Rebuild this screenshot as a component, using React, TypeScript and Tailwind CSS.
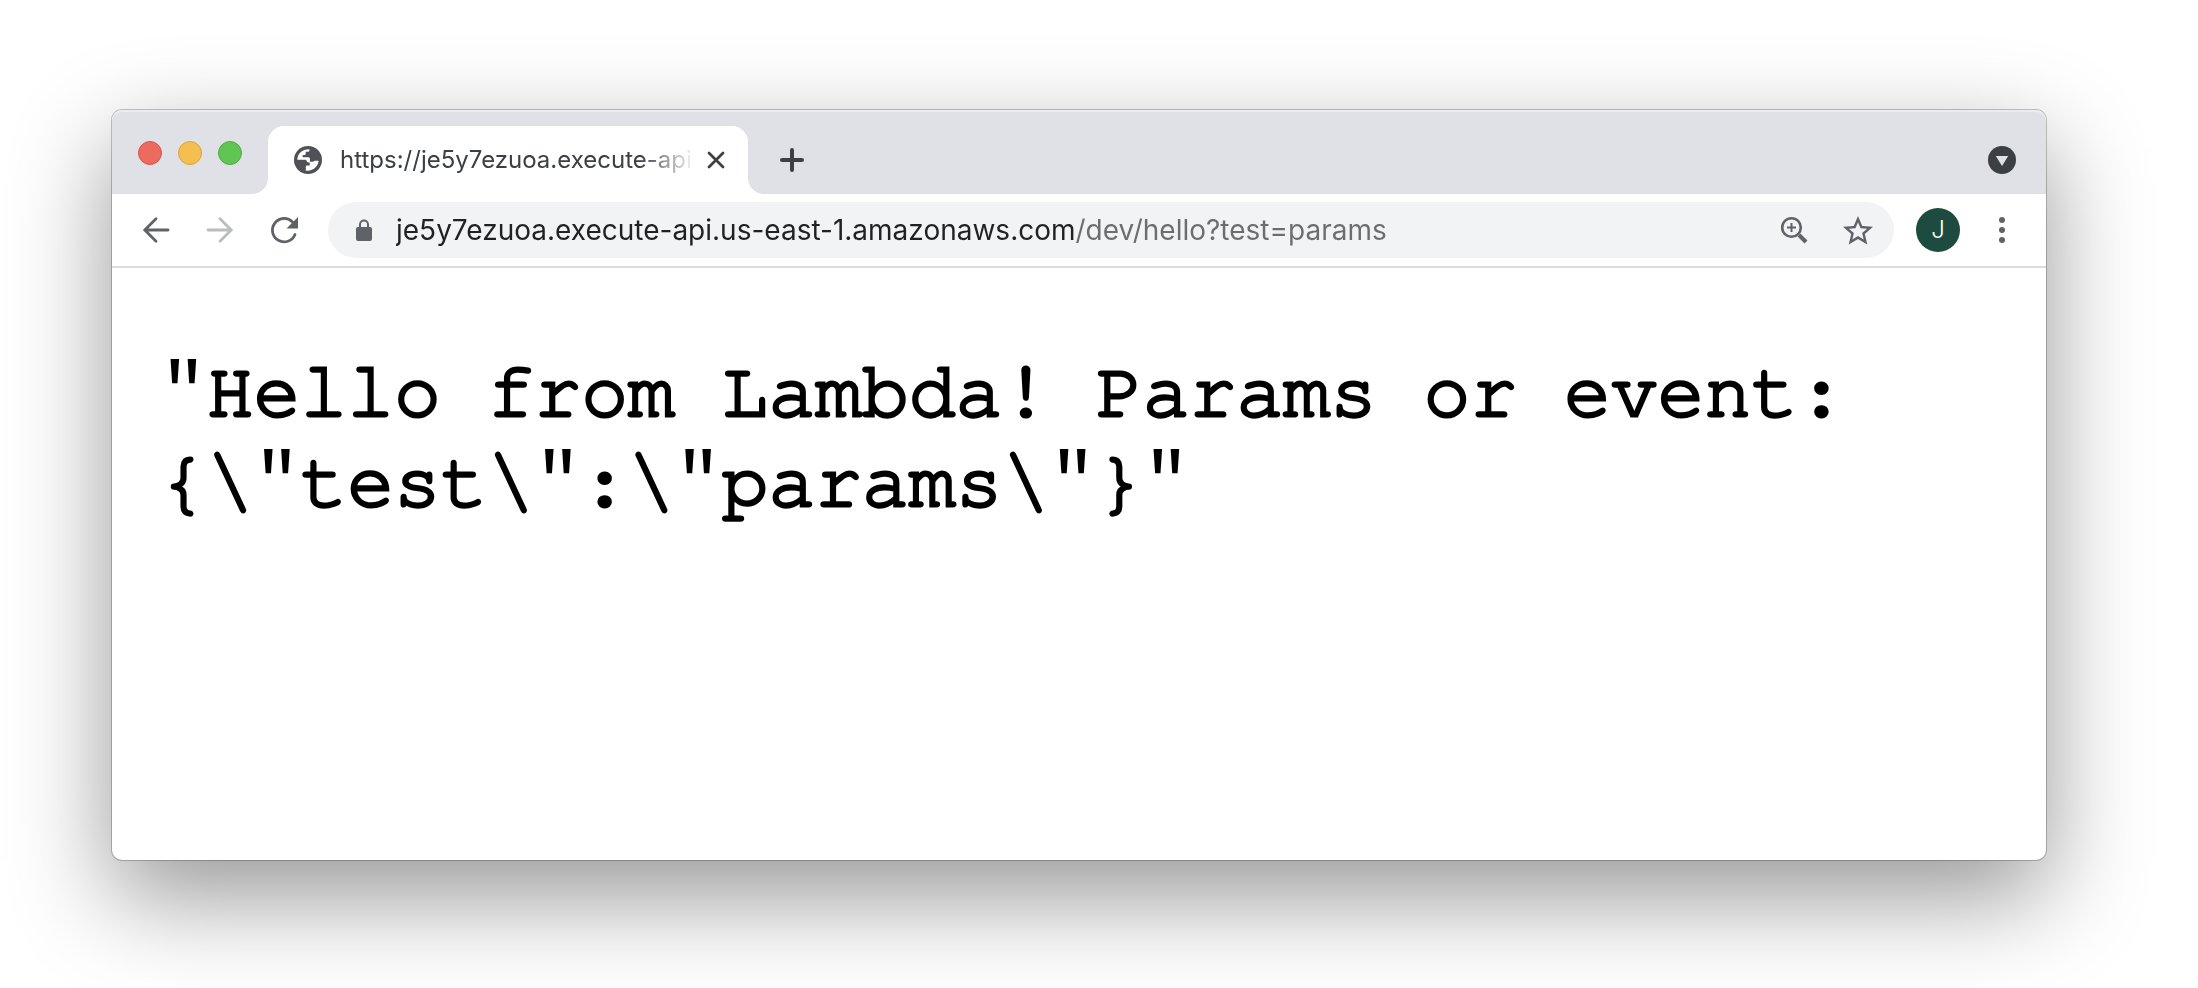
import React from "react";

type IconProps = { className?: string; children: React.ReactNode; size?: number };

function Icon({ className, children, size = 32 }: IconProps) {
  return (
    <svg viewBox={`0 0 ${size} ${size}`} width={size} height={size} className={className} aria-hidden="true">
      {children}
    </svg>
  );
}

function TrafficLights() {
  return (
    <div className="flex gap-4 pl-[26px] pt-[31px]">
      <button aria-label="Close window" className="size-6 rounded-full border border-[#d6574c] bg-[#ec6a5e]" />
      <button aria-label="Minimize window" className="size-6 rounded-full border border-[#d8a23c] bg-[#f5bf4f]" />
      <button aria-label="Zoom window" className="size-6 rounded-full border border-[#50ab42] bg-[#61c554]" />
    </div>
  );
}

function Tab() {
  return (
    <div className="mt-4 ml-[10px] flex h-[68px] items-end">
      <Icon size={16} className="block shrink-0 text-white">
        <path d="M16 0v16H0A16 16 0 0 0 16 0z" fill="currentColor" />
      </Icon>
      <div className="flex h-full w-[480px] items-center rounded-t-2xl bg-white pr-4 pl-6">
        <Icon className="shrink-0 text-[#505157]">
          <circle cx="16" cy="16" r="14" fill="currentColor" />
          <path
            d="M5.300 15.800A10.700 10.700 0 0 1 17.500 5.400v.8c0 1-.8 1.600-1.800 1.600h-2v2c0 .8-.6 1.300-1.400 1.300h-1.600v2.200h5.600c.9 0 1.600.7 1.600 1.600v2.800h2.400c1 0 1.600-.3 2.200-.9h4.100A10.700 10.700 0 0 1 13.800 26.400V23c0-.9.500-1.400 1.400-1.400h1.700c.6 0 .9-.4.9-.9v-1.900c-1.900 0-3.100-.9-3.500-2.500-.1-.3-.3-.5-.7-.5z"
            fill="#fff"
          />
        </Icon>
        <div className="ml-4 w-[356px] mask-r-from-[300px] mask-r-to-[356px] text-2xl whitespace-nowrap text-[#3c4043]">
          https://je5y7ezuoa.execute-api
        </div>
        <button aria-label="Close tab" className="ml-auto flex size-8 items-center justify-center">
          <Icon className="text-[#3c4043]">
            <path d="M9 9l14 14M23 9L9 23" stroke="currentColor" strokeWidth="2.800" strokeLinecap="round" />
          </Icon>
        </button>
      </div>
      <Icon size={16} className="block shrink-0 text-white">
        <path d="M0 0v16h16A16 16 0 0 1 0 0z" fill="currentColor" />
      </Icon>
    </div>
  );
}

function TabStrip() {
  return (
    <header className="flex h-[84px] rounded-t-[10px] bg-[#dfe1e6] shadow-[inset_0_2px_0_#ececf0]">
      <TrafficLights />
      <Tab />
      <button aria-label="New tab" className="ml-3 flex h-[100px] w-8 items-center justify-center">
        <Icon className="text-[#3c4043]">
          <path d="M16 6v20M6 16h20" stroke="currentColor" strokeWidth="4" strokeLinecap="round" />
        </Icon>
      </button>
      <button aria-label="Search tabs" className="mr-7 ml-auto flex h-[100px] items-center">
        <Icon>
          <circle cx="16" cy="16" r="14" fill="#3c4043" />
          <path d="M9.800 12h12.400L16 22z" fill="#dfe1e6" />
        </Icon>
      </button>
    </header>
  );
}

function Toolbar() {
  return (
    <div className="flex h-[74px] items-center border-b-2 border-[#dadce0] pr-7 pl-7">
      <nav className="flex gap-8">
        <button aria-label="Back" className="size-8">
          <Icon className="text-[#5f6368]">
            <path d="M28 16H5M16 4.800L4.800 16 16 27.200" fill="none" stroke="currentColor" strokeWidth="2.800" strokeLinecap="round" />
          </Icon>
        </button>
        <button aria-label="Forward" className="size-8">
          <Icon className="text-[#babcbe]">
            <path d="M4 16h23M16 4.800L27.200 16 16 27.200" fill="none" stroke="currentColor" strokeWidth="2.800" strokeLinecap="round" />
          </Icon>
        </button>
        <button aria-label="Reload" className="size-8">
          <Icon className="text-[#5f6368]">
            <path d="M27 20.500A11.700 11.700 0 1 1 24.500 8" fill="none" stroke="currentColor" strokeWidth="2.800" strokeLinecap="round" />
            <path d="M30 3v11.500H18.500z" fill="currentColor" />
          </Icon>
        </button>
      </nav>
      <div className="ml-7 flex h-14 flex-1 items-center rounded-full bg-[#f1f3f4] pr-5 pl-5">
        <Icon className="shrink-0 text-[#5f6368]">
          <rect x="8" y="13" width="16" height="14" rx="2" fill="currentColor" />
          <path d="M12 14v-3.500a4 4 0 0 1 8 0V14" fill="none" stroke="currentColor" strokeWidth="2" />
        </Icon>
        <input
          aria-label="Address"
          type="text"
          defaultValue="je5y7ezuoa.execute-api.us-east-1.amazonaws.com/dev/hello?test=params"
          className="ml-4 h-full min-w-0 flex-1 bg-[linear-gradient(90deg,#202124_680px,#6b6d70_680px)] bg-clip-text text-[28px] text-transparent outline-none"
        />
        <div className="flex gap-8">
          <button aria-label="Zoom level" className="size-8">
            <Icon className="text-[#5f6368]">
              <circle cx="13.500" cy="13.500" r="9.300" fill="none" stroke="currentColor" strokeWidth="2.600" />
              <path d="M13.500 9v9M9 13.500h9" stroke="currentColor" strokeWidth="2" />
              <path d="M21 21l7 7" stroke="currentColor" strokeWidth="4" />
            </Icon>
          </button>
          <button aria-label="Bookmark this page" className="size-8">
            <Icon className="text-[#5f6368]">
              <path
                transform="translate(-2 -1) scale(1.5)"
                d="M22 9.240l-7.190-.62L12 2 9.190 8.630 2 9.240l5.460 4.730L5.820 21 12 17.270 18.180 21l-1.630-7.030L22 9.240zM12 15.400l-3.760 2.270 1-4.280-3.320-2.880 4.380-.38L12 6.100l1.710 4.040 4.380.38-3.320 2.880 1 4.280L12 15.400z"
                fill="currentColor"
              />
            </Icon>
          </button>
        </div>
      </div>
      <button aria-label="Profile" className="ml-[22px] flex size-11 items-center justify-center rounded-full bg-[#1e4b3f] text-2xl font-light text-white">
        J
      </button>
      <button aria-label="Menu" className="ml-[26px] size-8">
        <Icon className="text-[#5f6368]">
          <circle cx="16" cy="6" r="3" fill="currentColor" />
          <circle cx="16" cy="16" r="3" fill="currentColor" />
          <circle cx="16" cy="26" r="3" fill="currentColor" />
        </Icon>
      </button>
    </div>
  );
}

const RESPONSE = '"Hello from Lambda! Params or event: {\\"test\\":\\"params\\"}"';

/* Quote marks are set in a lighter face than the letters around them. */
function ResponseText() {
  return (
    <pre className="font-['Nimbus_Mono_PS','FreeMono','Liberation_Mono',monospace] text-[78px] leading-[90px] whitespace-pre-wrap text-black [-webkit-text-stroke:3px_black]">
      {RESPONSE.split(/(")/).map((part, i) =>
        part === '"' ? (
          <span key={i} className="font-['Liberation_Mono',monospace] leading-none [-webkit-text-stroke:0px]">
            {part}
          </span>
        ) : (
          part
        ),
      )}
    </pre>
  );
}

export default function App() {
  return (
    <div className="flex min-h-screen flex-col overflow-hidden bg-white pt-[110px] pr-[152px] pb-32 pl-28 font-['Inter','Liberation_Sans',sans-serif]">
      <div className="flex flex-1 flex-col rounded-[10px] bg-white shadow-[0_0_0_1px_rgba(0,0,0,0.22),0_36px_100px_rgba(0,0,0,0.42)]">
        <TabStrip />
        <Toolbar />
        <main className="flex-1 px-12 py-20">
          <ResponseText />
        </main>
      </div>
    </div>
  );
}
